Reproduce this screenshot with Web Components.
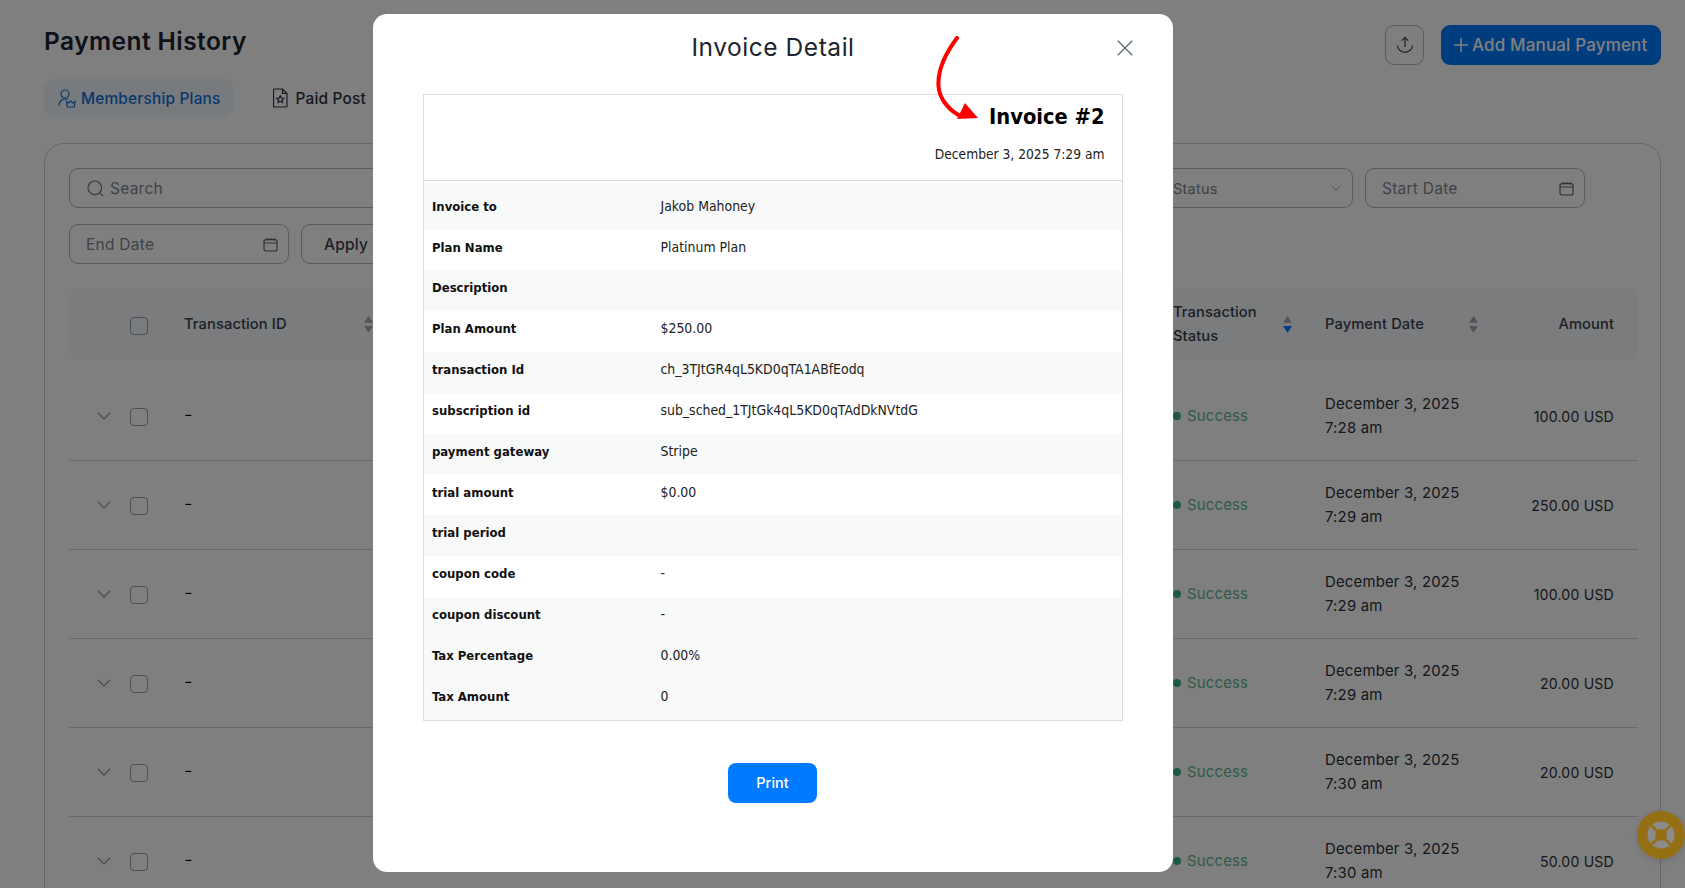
<!DOCTYPE html>
<html>
<head>
<meta charset="utf-8">
<title>Payment History</title>
<style>
	html, body { margin: 0; height: 100%; overflow: hidden; background: #fff; }
	body { font-family: Inter, "Noto Sans", sans-serif; color: #1d2430; }
</style>
</head>
<body>
<payment-page>
	<ph-tab active label="Membership Plans" icon="member"></ph-tab>
	<ph-tab label="Paid Post" icon="post"></ph-tab>
	<ph-row slot="rows" date="December 3, 2025" time="7:28 am" amount="100.00 USD"></ph-row>
	<ph-row slot="rows" date="December 3, 2025" time="7:29 am" amount="250.00 USD"></ph-row>
	<ph-row slot="rows" date="December 3, 2025" time="7:29 am" amount="100.00 USD"></ph-row>
	<ph-row slot="rows" date="December 3, 2025" time="7:29 am" amount="20.00 USD"></ph-row>
	<ph-row slot="rows" date="December 3, 2025" time="7:30 am" amount="20.00 USD"></ph-row>
	<ph-row slot="rows" date="December 3, 2025" time="7:30 am" amount="50.00 USD"></ph-row>
</payment-page>

<invoice-modal>
	<inv-row label="Invoice to" value="Jakob Mahoney"></inv-row>
	<inv-row white label="Plan Name" value="Platinum Plan"></inv-row>
	<inv-row label="Description"></inv-row>
	<inv-row white label="Plan Amount" value="$250.00"></inv-row>
	<inv-row label="transaction Id" value="ch_3TJtGR4qL5KD0qTA1ABfEodq"></inv-row>
	<inv-row white label="subscription id" value="sub_sched_1TJtGk4qL5KD0qTAdDkNVtdG"></inv-row>
	<inv-row label="payment gateway" value="Stripe"></inv-row>
	<inv-row white label="trial amount" value="$0.00"></inv-row>
	<inv-row label="trial period"></inv-row>
	<inv-row white label="coupon code" value="-"></inv-row>
	<inv-row label="coupon discount" value="-"></inv-row>
	<inv-row label="Tax Percentage" value="0.00%"></inv-row>
	<inv-row label="Tax Amount" value="0"></inv-row>
</invoice-modal>

<help-button></help-button>

<script>
	(function() {
		const calendarIcon = '<svg width="15" height="15" viewBox="0 0 15 15" fill="none" stroke="currentColor" stroke-width="1.2"><rect x="1" y="2.6" width="13" height="11.4" rx="2"/><path d="M1 6h13M4 .8v2.6M11 .8v2.6M6 2.2h3"/></svg>';
		const chevron = '<svg width="14" height="8" viewBox="0 0 14 8" fill="none" stroke="currentColor" stroke-width="1.4"><path d="M.8.8 7 7l6.2-6.2"/></svg>';
		const tableCols = '115px 989px 152px 186px 127px';

		function sortIcon(active) {
			return '<svg width="9" height="17" viewBox="0 0 9 17"><path d="M4.5 0 9 6.800H0z" fill="#a5a9b0"/><path d="M0 10h9l-4.500 6.800z" fill="' + (active ? '#007bff' : '#a5a9b0') + '"/></svg>';
		}

		// shared box for the inputs of the filter bar
		class PhField extends HTMLElement {
			constructor() {
				super();
				const shadow = this.attachShadow({mode: 'open'});
				const kind = this.getAttribute('kind');
				let lead = '';
				let tail = '';
				if (kind === 'search') {
					lead = '<svg width="17" height="17" viewBox="0 0 17 17" fill="none" stroke="#6f7682" stroke-width="1.2"><circle cx="7.800" cy="7.800" r="6.800"/><path d="m12.800 12.800 3.200 3.200"/></svg>';
				}
				if (kind === 'date') tail = calendarIcon;
				if (kind === 'select') tail = chevron.replace('width="14" height="8"', 'width="10" height="6"');
				shadow.innerHTML = `
					<style>
						:host {
							display: flex;
							align-items: center;
							box-sizing: border-box;
							height: 40px;
							padding: 0 10px 0 16px;
							border: 1px solid #b4b8c2;
							border-radius: 9px;
							color: #7f8590;
							font-size: 15.5px;
							letter-spacing: .25px;
						}
						:host([kind=search]) { padding-left: 17px; gap: 6px; }
						:host([kind=select]) { padding-left: 15px; font-size: 14.500px; }
						span { flex: 1; }
						svg { color: #5d6470; display: block; }
						:host([kind=select]) svg { color: #9aa0aa; margin-right: 1px; }
					</style>
					${lead}<span>${this.getAttribute('label')}</span>${tail}`;
			}
		}
		customElements.define('ph-field', PhField);

		class PhTab extends HTMLElement {
			constructor() {
				super();
				const shadow = this.attachShadow({mode: 'open'});
				const icons = {
					member: '<svg width="18" height="19" viewBox="0 0 18 19" fill="none" stroke="currentColor" stroke-width="1.200"><circle cx="7" cy="5" r="4"/><path d="M1 17c0-4 2.500-7 6-7 1 0 1.800.2 2.500.6"/><path d="M8.500 12.500l2.300 1.500L12.800 12l2 2 2.200-1.500-.8 5.500H9.300z"/></svg>',
					post: '<svg width="15" height="20" viewBox="0 0 15 20" fill="none" stroke="currentColor" stroke-width="1.200"><path d="M1.500 1h8l4.500 4.500V18a1 1 0 0 1-1 1H1.500a1 1 0 0 1-1-1V2a1 1 0 0 1 1-1z"/><path d="M9.500 1v4.500H14"/><path d="m7.300 7.800 1.100 2.200 2.400.3-1.700 1.700.4 2.400-2.200-1.100-2.200 1.100.4-2.400-1.700-1.700 2.400-.3z"/></svg>'
				};
				shadow.innerHTML = `
					<style>
						:host {
							display: flex;
							align-items: center;
							gap: 5px;
							height: 38px;
							padding: 0 12px 0 14px;
							border-radius: 9px;
							color: #2b3240;
							font-size: 15.400px;
							font-weight: 500;
							letter-spacing: .2px;
						}
						:host([icon=post]) { gap: 8px; }
						:host([active]) { background: #eff6fd; color: #0f6fd8; }
						svg { display: block; }
					</style>
					${icons[this.getAttribute('icon')]}<span>${this.getAttribute('label')}</span>`;
			}
		}
		customElements.define('ph-tab', PhTab);

		class PhRow extends HTMLElement {
			constructor() {
				super();
				const shadow = this.attachShadow({mode: 'open'});
				shadow.innerHTML = `
					<style>
						:host {
							display: grid;
							grid-template-columns: ${tableCols};
							align-items: center;
							height: 88px;
							border-bottom: 1px solid #cfd2d8;
							font-size: 14.900px;
							letter-spacing: .2px;
							color: #2a2f38;
						}
						.pick { display: flex; align-items: center; padding-left: 28px; gap: 19px; color: #9a9fa8; }
						.box { box-sizing: border-box; width: 18px; height: 18px; margin-top: 2px; border: 1px solid #999ea8; border-radius: 4px; }
						.dash { font-size: 19px; font-weight: 300; line-height: 20px; margin-top: -3px; color: #000; }
						.success { display: flex; align-items: center; gap: 6px; color: #62b592; }
						.dot { width: 8px; height: 8px; border-radius: 50%; background: #3bb583; }
						.date { line-height: 24px; }
						.amount { font-size: 14.100px; text-align: right; padding-right: 24px; }
					</style>
					<div class="pick">${chevron}<div class="box"></div></div>
					<div class="dash">-</div>
					<div class="success"><div class="dot"></div><span>Success</span></div>
					<div class="date">${this.getAttribute('date')}<br>${this.getAttribute('time')}</div>
					<div class="amount">${this.getAttribute('amount')}</div>`;
			}
		}
		customElements.define('ph-row', PhRow);

		class PaymentPage extends HTMLElement {
			constructor() {
				super();
				const shadow = this.attachShadow({mode: 'open'});
				shadow.innerHTML = `
					<style>
						:host { display: block; box-sizing: border-box; height: 888px; padding: 25px 24px 0 44px; overflow: hidden; }
						.top { display: flex; align-items: center; height: 40px; }
						h1 { flex: 1; margin: 0 0 8px; font-size: 24.500px; font-weight: 600; letter-spacing: .45px; color: #1c2230; }
						.export {
							display: flex; align-items: center; justify-content: center;
							box-sizing: border-box; width: 39px; height: 40px; margin-right: 17px;
							border: 1px solid #b4b8c2; border-radius: 9px;
						}
						.add {
							display: flex; align-items: center; gap: 3px;
							box-sizing: border-box; width: 220px; height: 40px; padding-left: 12px;
							background: #007bff; border-radius: 9px;
							color: #fff; font-size: 17px; font-weight: 500; letter-spacing: .15px;
						}
						.tabs { display: flex; gap: 26px; margin-top: 14px; }
						.card {
							margin-top: 26px; height: 800px; padding: 24px 22px 0 24px;
							border: 1px solid #cdd0d8; border-radius: 20px;
						}
						.filters { display: flex; gap: 12px; }
						.second { margin-top: 16px; }
						.apply {
							display: flex; align-items: center; justify-content: center;
							box-sizing: border-box; width: 90px; height: 40px;
							border: 1px solid #b4b8c2; border-radius: 9px;
							font-size: 15.500px; font-weight: 500; color: #3a404c; letter-spacing: .2px;
						}
						.head {
							display: grid;
							grid-template-columns: ${tableCols};
							align-items: center;
							height: 72px; margin: 24px 0 12px;
							background: #f4f9fb; border-radius: 12px;
							font-size: 14.700px; font-weight: 500; letter-spacing: .1px; color: #3a404c;
						}
						.check { box-sizing: border-box; width: 18px; height: 18px; margin: 3px 0 0 61px; border: 1px solid #999ea8; border-radius: 4px; }
						.col { display: flex; align-items: center; justify-content: space-between; }
						.id { width: 189px; }
						.status { padding-right: 33px; line-height: 24px; }
						.paydate { padding-right: 33px; }
						.amount { text-align: right; padding-right: 24px; }
						svg { display: block; }
					</style>
					<div class="top">
						<h1>Payment History</h1>
						<div class="export">
							<svg width="18" height="18" viewBox="0 0 18 18" fill="none" stroke="#4a505c" stroke-width="1.300"><path d="M9 1.500V11M5.800 4.600 9 1.500l3.200 3.100"/><path d="M1.500 9.500a7.500 6.800 0 0 0 15 0"/></svg>
						</div>
						<div class="add">
							<svg width="16" height="16" viewBox="0 0 16 16" stroke="#fff" stroke-width="1.500"><path d="M8 1v14M1 8h14"/></svg>
							<span>Add Manual Payment</span>
						</div>
					</div>
					<div class="tabs"><slot></slot></div>
					<div class="card">
						<div class="filters">
							<ph-field kind="search" label="Search" style="width: 1076px"></ph-field>
							<ph-field kind="select" label="Status" style="width: 196px"></ph-field>
							<ph-field kind="date" label="Start Date" style="width: 220px"></ph-field>
						</div>
						<div class="filters second">
							<ph-field kind="date" label="End Date" style="width: 220px"></ph-field>
							<div class="apply">Apply</div>
						</div>
						<div class="head">
							<div class="check"></div>
							<div class="col id"><span>Transaction ID</span>${sortIcon(false)}</div>
							<div class="col status"><span>Transaction<br>Status</span>${sortIcon(true)}</div>
							<div class="col paydate"><span>Payment Date</span>${sortIcon(false)}</div>
							<div class="amount">Amount</div>
						</div>
						<slot name="rows"></slot>
					</div>`;
			}
		}
		customElements.define('payment-page', PaymentPage);

		class InvRow extends HTMLElement {
			constructor() {
				super();
				const shadow = this.attachShadow({mode: 'open'});
				shadow.innerHTML = `
					<style>
						:host {
							display: grid;
							grid-template-columns: 228.500px 1fr;
							box-sizing: border-box;
							height: 40.850px;
							padding-left: 8px;
							line-height: 34px;
						}
						:host([white]) { background: #fff; }
						b { padding-top: 1px; font-size: 13px; font-weight: 700; color: #111; }
						span { font-size: 13.900px; color: #222; }
					</style>
					<b>${this.getAttribute('label')}</b><span>${this.getAttribute('value') || ''}</span>`;
			}
		}
		customElements.define('inv-row', InvRow);

		class InvoiceModal extends HTMLElement {
			constructor() {
				super();
				const shadow = this.attachShadow({mode: 'open'});
				shadow.innerHTML = `
					<style>
						:host {
							position: fixed; inset: 0;
							display: block;
							background: rgba(0, 0, 0, .5);
						}
						.modal {
							box-sizing: border-box;
							width: 800px; height: 858px;
							margin: 14px 0 0 373px;
							padding: 0 50px;
							background: #fff;
							border-radius: 14px;
						}
						.title {
							display: grid;
							grid-template-columns: 1fr auto 1fr;
							align-items: center;
							height: 66px;
							margin-bottom: 14px;
						}
						h2 { margin: 0; font-size: 24.500px; font-weight: 400; letter-spacing: .55px; color: #20242c; }
						.close { justify-self: end; margin: 2px -10px 0 0; display: block; }
						.sheet {
							position: relative;
							box-sizing: border-box;
							height: 627px;
							border: 1px solid #dcdcdc;
							font-family: "DejaVu Sans Condensed", "DejaVu Sans", sans-serif;
							background: #f8f9f9;
						}
						.head {
							box-sizing: border-box;
							height: 86px;
							padding: 7px 17.500px 0 0;
							background: #fff;
							border-bottom: 1px solid #dcdcdc;
							text-align: right;
							color: #222;
						}
						.num { font-size: 21.700px; font-weight: 700; line-height: 30px; color: #000; }
						.when { margin-top: 12px; font-size: 13.700px; line-height: 20px; }
						.list { padding-top: 7.700px; }
						.arrow { position: absolute; left: 512px; top: -59px; }
						button {
							display: block;
							width: 89px; height: 40px;
							margin: 42px 0 0 305px;
							border: 0; border-radius: 8px;
							background: #007bff; color: #fff;
							font: 500 14.500px Inter, sans-serif;
							padding-bottom: 2px;
						}
					</style>
					<div class="modal">
						<div class="title">
							<span></span>
							<h2>Invoice Detail</h2>
							<svg class="close" width="16" height="16" viewBox="0 0 16 16" stroke="#5c6a85" stroke-width="1.300"><path d="M.8.8l14.400 14.400M15.200.8.800 15.200"/></svg>
						</div>
						<div class="sheet">
							<div class="head">
								<div class="num">Invoice #2</div>
								<div class="when">December 3, 2025 7:29 am</div>
							</div>
							<div class="list"><slot></slot></div>
							<svg class="arrow" width="60" height="90" viewBox="0 0 60 90" fill="none">
								<path d="M21 2C9 18 1.500 34 2.500 50c.6 11 8 22 20 29" stroke="#f00" stroke-width="4" stroke-linecap="round"/>
								<path d="M21 83l8-16 13 15z" fill="#f00"/>
							</svg>
						</div>
						<button>Print</button>
					</div>`;
			}
		}
		customElements.define('invoice-modal', InvoiceModal);

		class HelpButton extends HTMLElement {
			constructor() {
				super();
				const shadow = this.attachShadow({mode: 'open'});
				shadow.innerHTML = `
					<style>
						:host { position: fixed; right: 0; top: 811px; width: 48px; height: 48px; display: block; border-radius: 50%; box-shadow: 0 2px 8px rgba(0,0,0,.12); }
						svg { display: block; }
					</style>
					<svg width="48" height="48" viewBox="0 0 48 48">
						<circle cx="24" cy="24" r="24" fill="#946f14"/>
						<circle cx="24" cy="24" r="13.500" fill="#8b8b8b"/>
						<path d="M14.500 14.500l19 19M33.500 14.500l-19 19" stroke="#946f14" stroke-width="2.600"/>
						<rect x="18.500" y="18.500" width="11" height="11" rx="2" fill="#946f14"/>
					</svg>`;
			}
		}
		customElements.define('help-button', HelpButton);
	})();
</script>
</body>
</html>
